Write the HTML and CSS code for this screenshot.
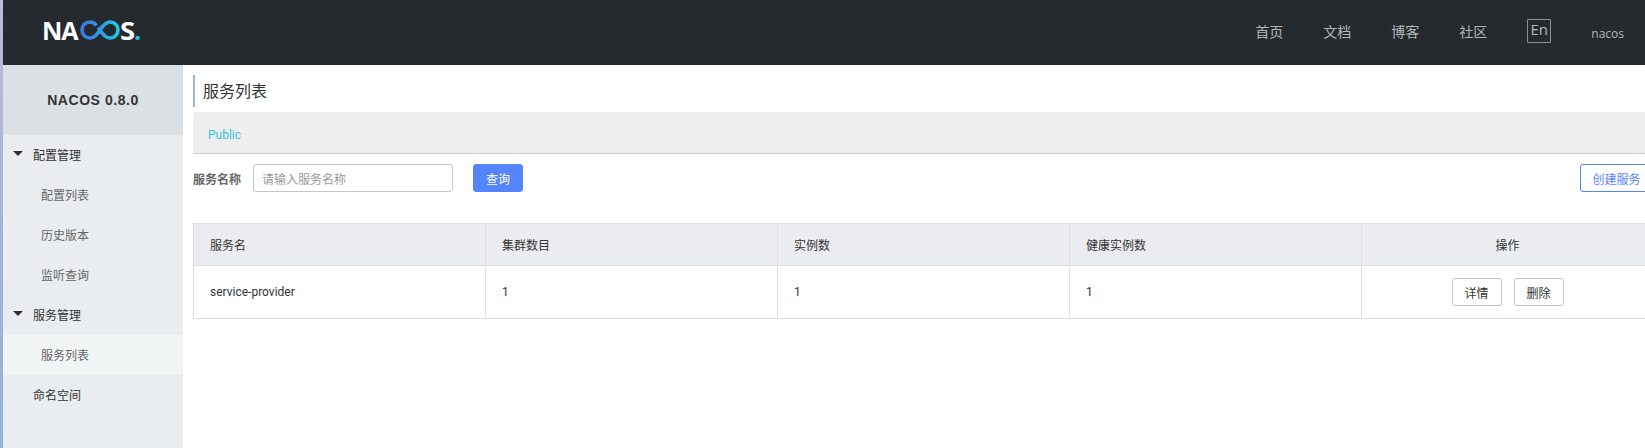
FILE: index.html
```html
<!DOCTYPE html>
<html lang="zh-CN">
<head>
<meta charset="utf-8">
<title>Nacos</title>
<link rel="stylesheet" href="styles.css">
</head>
<body>
<div class="page">
  <div class="edge"></div>
  <div class="shell">
    <header class="topbar">
      <div class="logo">
        <span class="logo-na">NA</span>
        <svg class="logo-mark" width="40" height="20" viewBox="0 0 40 20" aria-hidden="true">
          <defs>
            <linearGradient id="inf" x1="0" x2="1" y1="0" y2="0">
              <stop offset="0" stop-color="#3d78e6"/>
              <stop offset="0.5" stop-color="#2f9be6"/>
              <stop offset="1" stop-color="#20c9e6"/>
            </linearGradient>
          </defs>
          <path d="M16.5 5.5 C14.8 3.3 12.6 2 10 2 C5.4 2 2 5.4 2 10 C2 14.6 5.4 18 10 18 C15 18 17.5 13.5 20 10 C22.5 6.5 25 2 30 2 C34.6 2 38 5.4 38 10 C38 14.6 34.6 18 30 18 C25 18 22.5 13.5 20 10 C19.4 9.1 18.8 8.3 18.2 7.5" fill="none" stroke="url(#inf)" stroke-width="3.6"/>
        </svg>
        <span class="logo-s">S</span><span class="logo-dot">.</span>
      </div>
      <nav class="topnav">
        <a class="nav-link">首页</a>
        <a class="nav-link">文档</a>
        <a class="nav-link">博客</a>
        <a class="nav-link">社区</a>
        <span class="lang">En</span>
        <span class="user">nacos</span>
      </nav>
    </header>
    <div class="body">
      <aside class="sidebar">
        <div class="side-title">NACOS 0.8.0</div>
        <ul class="menu">
          <li class="menu-item group"><i class="caret"></i>配置管理</li>
          <li class="menu-item sub">配置列表</li>
          <li class="menu-item sub">历史版本</li>
          <li class="menu-item sub">监听查询</li>
          <li class="menu-item group"><i class="caret"></i>服务管理</li>
          <li class="menu-item sub active">服务列表</li>
          <li class="menu-item group">命名空间</li>
        </ul>
      </aside>
      <main class="main">
        <div class="content">
          <h1 class="page-title">服务列表</h1>
          <div class="tabs"><a class="tab">Public</a></div>
          <form class="search">
            <label class="search-label">服务名称</label>
            <input class="search-input" type="text" placeholder="请输入服务名称">
            <button class="btn primary" type="button">查询</button>
            <button class="btn create" type="button">创建服务</button>
          </form>
          <table class="grid">
            <thead>
              <tr>
                <th>服务名</th>
                <th>集群数目</th>
                <th>实例数</th>
                <th>健康实例数</th>
                <th class="center">操作</th>
              </tr>
            </thead>
            <tbody>
              <tr>
                <td><span class="cell-text">service-provider</span></td>
                <td><span class="cell-text">1</span></td>
                <td><span class="cell-text">1</span></td>
                <td><span class="cell-text">1</span></td>
                <td class="center">
                  <div class="actions">
                    <button class="btn plain" type="button">详情</button>
                    <button class="btn plain" type="button">删除</button>
                  </div>
                </td>
              </tr>
            </tbody>
          </table>
        </div>
      </main>
    </div>
  </div>
</div>
</body>
</html>
```
FILE: styles.css
```css
* { box-sizing: border-box; }
html, body { margin: 0; padding: 0; height: 100%; overflow: hidden; background: #fff; }
body { font-family: Roboto, "Noto Sans CJK SC", sans-serif; font-size: 12px; color: #333; }

.page { display: flex; width: 1645px; height: 448px; overflow: hidden; }
.edge { flex: 0 0 3px; background: linear-gradient(#b9bcdc 0, #a9b4d8 40%, #8fb2d8 100%); }
.shell { flex: 1; min-width: 0; display: flex; flex-direction: column; }

.topbar { flex: 0 0 65px; background: #252a2f; display: flex; align-items: center; justify-content: space-between; padding: 0 21px 0 39px; }
.logo { display: flex; align-items: center; height: 20px; color: #fff; font-family: "Open Sans", sans-serif; font-weight: 700; font-size: 25px; line-height: 20px; margin-top: -6px; }
.logo-na { width: 38px; white-space: nowrap; letter-spacing: -1px; }
.logo-mark { display: block; flex: none; }
.logo-s { width: 14px; transform: scaleX(1.1); transform-origin: left center; }
.logo-dot { color: #22c8e6; }
.topnav { display: flex; align-items: center; gap: 40px; color: #b4b6b8; }
.nav-link { font-size: 14px; font-family: "Noto Sans CJK SC", sans-serif; margin-top: -4px; }
.lang { width: 24px; height: 24px; border: 1px solid #8f9194; border-radius: 1px; font-size: 15px; line-height: 19px; text-align: center; margin-top: -3px; font-family: "Open Sans", sans-serif; }
.user { font-size: 12px; font-family: "Open Sans", sans-serif; margin-top: 1px; }

.body { flex: 1; display: flex; min-height: 0; }
.sidebar { flex: 0 0 180px; background: #e9edf0; }
.side-title { height: 70px; background: #dbe0e4; display: flex; align-items: center; justify-content: center; font-family: "Liberation Sans", sans-serif; font-weight: 700; font-size: 14px; letter-spacing: 0.55px; color: #333; }
.menu { list-style: none; margin: 0; padding: 0; }
.menu-item { position: relative; height: 40px; line-height: 40px; font-size: 12px; font-family: "Noto Sans CJK SC", sans-serif; }
.group { padding-left: 30px; color: #333; }
.sub { padding-left: 38px; color: #666; }
.active { background: #f2f5f6; }
.caret { position: absolute; left: 10px; top: 16px; width: 0; height: 0; border-left: 5px solid transparent; border-right: 5px solid transparent; border-top: 5px solid #333; }

.main { flex: 1; min-width: 0; overflow: hidden; padding: 10px 0 0 10px; }
.content { width: 1460px; }
.page-title { margin: 0 0 5px; height: 32px; line-height: 30px; border-left: 2px solid #9ab8d6; padding-left: 8px; font-size: 16px; font-weight: 400; color: #333; font-family: "Noto Sans CJK SC", sans-serif; }
.tabs { height: 42px; background: #eee; border-bottom: 1px solid #ccc; padding-left: 15px; line-height: 46px; }
.tab { color: #33c4de; font-size: 12px; }

.search { display: flex; align-items: center; margin: 10px 0 31px; }
.search-label { width: 48px; margin-right: 12px; font-weight: 700; color: #666; font-family: "Noto Sans CJK SC", sans-serif; }
.search-input { width: 200px; height: 28px; border: 1px solid #c4c6cf; border-radius: 3px; padding: 0 8px; font: 12px "Noto Sans CJK SC", sans-serif; margin-right: 20px; outline: 0; }
.search-input::placeholder { color: #999; }
.btn { height: 28px; padding: 0; width: 50px; border-radius: 3px; font: 12px "Noto Sans CJK SC", sans-serif; cursor: pointer; }
.primary { background: #5584ff; border: 1px solid #5584ff; color: #fff; }
.create { margin-left: auto; width: 73px; background: #fff; border: 1px solid #5584ff; color: #5584ff; }
.plain { background: #fff; border: 1px solid #c4c6cf; color: #333; }

.grid { width: 1461px; table-layout: fixed; border-collapse: collapse; }
.grid th, .grid td { border: 1px solid #dcdee3; padding: 0 16px; text-align: left; font-size: 12px; font-weight: 400; color: #333; }
.grid th { height: 42px; background: #ebecf0; font-family: "Noto Sans CJK SC", sans-serif; }
.grid td { height: 53px; }
.cell-text { display: block; margin-top: -1px; }
.grid .center { text-align: center; }
.actions { display: flex; justify-content: center; gap: 12px; }
```
